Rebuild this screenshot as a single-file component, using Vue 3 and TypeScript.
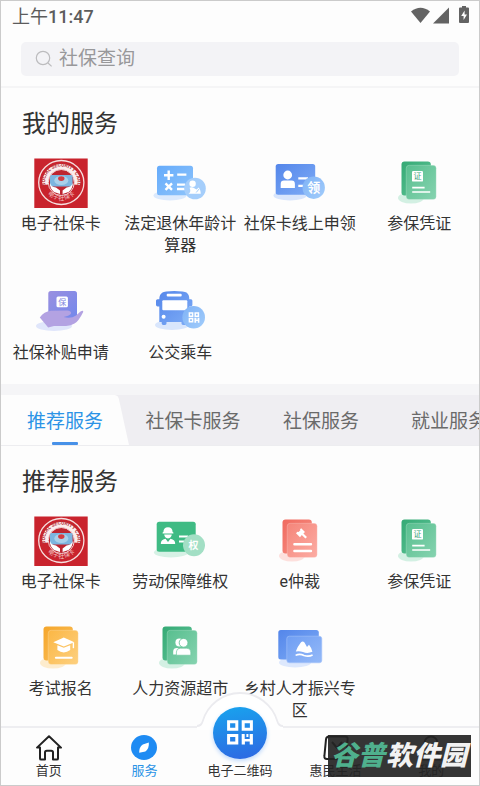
<script setup lang="ts">
import { ref } from 'vue'

interface Service {
  name: string
  icon: string
}

interface NavItem {
  name: string
  icon: string
}

const keyword = ref('')
const activeTab = ref(0)
const activeNav = ref('服务')

const tabs: string[] = ['推荐服务', '社保卡服务', '社保服务', '就业服务']

const myServices: Service[] = [
  { name: '电子社保卡', icon: 'seal' },
  { name: '法定退休年龄计算器', icon: 'calc' },
  { name: '社保卡线上申领', icon: 'apply' },
  { name: '参保凭证', icon: 'proof' },
  { name: '社保补贴申请', icon: 'subsidy' },
  { name: '公交乘车', icon: 'bus' },
]

const recommended: Service[] = [
  { name: '电子社保卡', icon: 'seal' },
  { name: '劳动保障维权', icon: 'labor' },
  { name: 'e仲裁', icon: 'gavel' },
  { name: '参保凭证', icon: 'proof' },
  { name: '考试报名', icon: 'exam' },
  { name: '人力资源超市', icon: 'people' },
  { name: '乡村人才振兴专区', icon: 'village' },
]

const groups = [
  { key: 'mine', title: '我的服务', items: myServices },
  { key: 'recommended', title: '推荐服务', items: recommended },
]

const navItems: NavItem[] = [
  { name: '首页', icon: 'home' },
  { name: '服务', icon: 'compass' },
  { name: '电子二维码', icon: 'qr' },
  { name: '惠民生活', icon: 'life' },
  { name: '我的', icon: 'me' },
]

// Documents share one two-sheet shape and differ in colour and emblem.
const sheetColor: Record<string, string> = {
  proof: 'green',
  people: 'green',
  gavel: 'red',
  exam: 'amber',
}
</script>

<template>
  <div class="page">
    <svg class="defs" aria-hidden="true">
      <defs>
        <linearGradient id="g-sky" x1="0" y1="0" x2="1" y2="1"><stop offset="0" stop-color="#65abfb" /><stop offset="1" stop-color="#8ec4fb" /></linearGradient>
        <linearGradient id="g-blue" x1="0" y1="0" x2="1" y2="1"><stop offset="0" stop-color="#5486ea" /><stop offset="1" stop-color="#7eacf6" /></linearGradient>
        <linearGradient id="g-blue-light" x1="0" y1="0" x2="1" y2="1"><stop offset="0" stop-color="#6f9ef3" /><stop offset="1" stop-color="#94b9f8" /></linearGradient>
        <linearGradient id="g-badge" x1="0" y1="0" x2="1" y2="1"><stop offset="0" stop-color="#7fb2f6" /><stop offset="1" stop-color="#a2cdfb" /></linearGradient>
        <linearGradient id="g-violet" x1="0" y1="0" x2="1" y2="1"><stop offset="0" stop-color="#9a8fe0" /><stop offset="1" stop-color="#7288ec" /></linearGradient>
        <linearGradient id="g-green" x1="0" y1="0" x2="1" y2="1"><stop offset="0" stop-color="#35aa75" /><stop offset="1" stop-color="#5fc497" /></linearGradient>
        <linearGradient id="g-green-light" x1="0" y1="0" x2="1" y2="1"><stop offset="0" stop-color="#58bf8f" /><stop offset="1" stop-color="#86d3b0" /></linearGradient>
        <linearGradient id="g-red" x1="0" y1="0" x2="1" y2="1"><stop offset="0" stop-color="#f06a5f" /><stop offset="1" stop-color="#f79186" /></linearGradient>
        <linearGradient id="g-red-light" x1="0" y1="0" x2="1" y2="1"><stop offset="0" stop-color="#f5857a" /><stop offset="1" stop-color="#fcaca3" /></linearGradient>
        <linearGradient id="g-amber" x1="0" y1="0" x2="1" y2="1"><stop offset="0" stop-color="#f5a62b" /><stop offset="1" stop-color="#fbc05a" /></linearGradient>
        <linearGradient id="g-amber-light" x1="0" y1="0" x2="1" y2="1"><stop offset="0" stop-color="#fbb745" /><stop offset="1" stop-color="#fdd07f" /></linearGradient>
        <path id="seal-arc" d="M15.6 33 A16.2 15.8 0 1 1 45 33" />
        <path id="seal-arc-low" d="M13.6 34.6 A19.5 19 0 0 0 47 34.6" />
      </defs>
    </svg>

    <header class="header">
      <div class="status">
        <span>上午<time>11:47</time></span>
        <svg class="status__icons" viewBox="0 0 60 18" aria-hidden="true">
          <path d="M1 5.5 Q10.5 -2 20 5.5 L10.5 17Z" />
          <path d="M23 17.5 H39 V1.5Z" />
          <path d="M52 0 h4 v1.6 h2 q1 0 1 1 V16 q0 1-1 1 H50 q-1 0-1-1 V2.6 q0-1 1-1 h2Z" />
          <path d="M54.6 4.6 L51.2 10 H53.6 V14 L57 8.6 H54.6Z" fill="#fff" />
        </svg>
      </div>
      <label class="search">
        <svg viewBox="0 0 18 18" aria-hidden="true">
          <circle cx="8" cy="8" r="6.7" /><path d="M13 13 L16.6 16.4" />
        </svg>
        <input v-model="keyword" type="search" placeholder="社保查询" aria-label="社保查询" />
      </label>
    </header>

    <main>
      <template v-for="(group, g) in groups" :key="group.key">
        <div v-if="g === 1" class="tabs" role="tablist">
          <button
            v-for="(tab, i) in tabs"
            :key="tab"
            type="button"
            role="tab"
            class="tab"
            :class="{ 'tab--active': i === activeTab }"
            :aria-selected="i === activeTab"
            @click="activeTab = i"
          >{{ tab }}</button>
        </div>

        <section class="group">
          <h2>{{ group.title }}</h2>
          <div class="grid">
            <a v-for="item in group.items" :key="item.name" class="service" href="#">
              <svg class="service__icon" viewBox="0 0 60 54" aria-hidden="true">
                <g v-if="item.icon === 'seal'">
                  <rect x="3.3" y="2.5" width="53.4" height="49.5" fill="#c9232d" />
                  <ellipse cx="30.3" cy="26.5" rx="22.6" ry="22" fill="none" stroke="#f6dfdf" stroke-width="1.3" />
                  <path d="M11.2 26.5 A19.1 18.5 0 0 1 49.4 26.5 L48.8 29 L43 28.5 A12.8 12.8 0 1 0 17.6 28.5 L11.8 29Z" fill="#fbeeee" />
                  <circle cx="30.3" cy="26.5" r="13" fill="#bd2530" stroke="#f3d4d4" stroke-width="1" />
                  <text class="seal-en"><textPath href="#seal-arc" startOffset="50%">SOCIAL SECURITY CARD</textPath></text>
                  <text class="seal-cn"><textPath href="#seal-arc-low" startOffset="50%">电子社保卡</textPath></text>
                  <rect x="19" y="19" width="22.6" height="11.5" rx="1.5" fill="#7cb5df" />
                  <ellipse cx="30.3" cy="24.5" rx="7" ry="4.5" fill="#a9d0ea" />
                  <ellipse cx="30.3" cy="22.6" rx="3.2" ry="2.4" fill="#d23b42" />
                  <path d="M19 27 Q20 31 25 31.5 L29 34.5 V38 L23 36 Q18.5 32 19 27Z M41.6 27 Q40.6 31 35.6 31.5 L31.6 34.5 V38 L37.6 36 Q42.1 32 41.6 27Z" fill="#fff" />
                </g>

                <g v-else-if="item.icon === 'calc'">
                  <ellipse cx="20" cy="39.5" rx="16.5" ry="5" fill="#dceafd" />
                  <rect x="7" y="9.7" width="36" height="29.5" rx="2.5" fill="url(#g-sky)" />
                  <path d="M14 19.2 H23.4 M18.7 14.5 V23.9 M27.2 18.6 H36.4 M15.5 27.4 L22 33.8 M22 27.4 L15.5 33.8 M27 28.6 H35 M27 33 H35" stroke="#fff" stroke-width="2.4" fill="none" />
                  <circle cx="45" cy="32.5" r="10.8" fill="#a5cefb" />
                  <circle cx="42.6" cy="27.8" r="3.2" fill="#fff" />
                  <path d="M39.6 31.8 Q41 30.6 43 31.6 L46.5 33.5 L48.8 31.4 Q50.5 33 50.8 37.8 H38.5 Q41.5 36 39.6 31.8Z" fill="#fff" />
                  <path d="M46.2 36.5 L49.5 32.5" stroke="#a5cefb" />
                </g>

                <g v-else-if="item.icon === 'apply'">
                  <ellipse cx="20" cy="39.5" rx="16.5" ry="5" fill="#d9e6fc" />
                  <rect x="5.7" y="8" width="39.5" height="30.7" rx="2.5" fill="url(#g-blue)" />
                  <circle cx="17.7" cy="19" r="4.4" fill="#fff" />
                  <path d="M10.7 32 V28 Q10.7 24.6 14 24.6 H21.6 Q24.9 24.6 24.9 28 V32Z" fill="#fff" />
                  <path d="M28.3 22.3 H38 M28.3 29.8 H34" stroke="#fff" stroke-width="2.2" />
                  <circle cx="43.7" cy="31.7" r="11.2" fill="url(#g-badge)" />
                  <text class="badge-text" x="43.7" y="36.2">领</text>
                </g>

                <g v-else-if="item.icon === 'subsidy'">
                  <ellipse cx="23" cy="41" rx="18" ry="5" fill="#e0e6fb" />
                  <rect x="17.3" y="6" width="28.7" height="29" rx="2.5" fill="url(#g-violet)" />
                  <rect x="25.5" y="11.5" width="11.4" height="10.8" rx="1.5" fill="#fff" />
                  <text class="tiny-text tiny-text--violet" x="31.2" y="20">保</text>
                  <path d="M8.8 32.5 Q13 26.6 20 25.8 L36 25.6 Q40.6 26 40 28.6 Q39 31 32.5 32 Q40 34 45 30.5 L49.5 26.5 Q52.5 25 52.2 27 Q47.5 36.5 43.5 38.6 Q40 41 35 41 H23 L17.2 42.5Z" fill="#b3a2e2" />
                </g>

                <g v-else-if="item.icon === 'bus'">
                  <ellipse cx="22" cy="40" rx="17" ry="5" fill="#d9e6fc" />
                  <path d="M12.5 7.6 Q14 6 24.3 6 Q34.5 6 36.5 7.6 Q39.3 9.5 39.3 14.2 H41 Q42.4 14.2 42.4 15.8 V19.8 Q42.4 21.4 41 21.4 H39.3 V37 H36.5 V38.6 Q36.5 40 35 40 H33 Q31.5 40 31.5 38.6 V37 H16.5 V38.6 Q16.5 40 15 40 H13.2 Q11.7 40 11.7 38.6 V37 H9.3 V21.4 H7.6 Q6 21.4 6 19.8 V15.8 Q6 14.2 7.6 14.2 H9.3 Q9.3 9.5 12.5 7.6Z" fill="url(#g-blue)" />
                  <rect x="16.7" y="8.8" width="15" height="2.8" rx="1" fill="#fff" />
                  <rect x="12.3" y="15.3" width="25" height="10" rx="1" fill="#fff" />
                  <circle cx="13.6" cy="31.8" r="2" fill="#fff" />
                  <circle cx="43.7" cy="32.3" r="11.3" fill="url(#g-badge)" />
                  <path d="M39.4 28 h3.2 v3.2 h-3.2Z M45.2 28 h3.2 v3.2 h-3.2Z M39.4 33.6 h3.2 v3.2 h-3.2Z" fill="none" stroke="#fff" stroke-width="1.5" />
                  <path d="M44.4 32.8 h2 v2 h1.2 v-2 h1.8 v5 h-1.6 v-1.8 h-1.6 v1.8 h-1.8Z" fill="#fff" />
                </g>

                <g v-else-if="item.icon === 'labor'">
                  <ellipse cx="21" cy="38.5" rx="17" ry="5" fill="#d6f1e5" />
                  <rect x="6.7" y="7.7" width="39" height="30" rx="2.5" fill="#3fbb84" />
                  <path d="M13.4 18 Q13.5 13.4 18 13.2 Q22.5 13.4 22.6 18 L23.4 18.6 V19.6 H12.6 V18.6Z M14.2 20.4 H21.8 Q21.4 24 18 24.4 Q14.6 24 14.2 20.4Z" fill="#fff" />
                  <path d="M10.8 30 Q10.6 25.6 15.5 24.8 L18 28 L20.5 24.8 Q25.4 25.6 25.2 30Z" fill="#fff" />
                  <path d="M29 22.5 H38 M29 27.5 H34" stroke="#fff" stroke-width="2" />
                  <circle cx="44" cy="31.3" r="11" fill="#a3dfc5" />
                  <text class="badge-text badge-text--small" x="43.4" y="35.2">权</text>
                </g>

                <g v-else-if="item.icon === 'village'">
                  <ellipse cx="25" cy="41.5" rx="16" ry="5" fill="#dde8fd" />
                  <rect x="8.3" y="9" width="40.5" height="29.5" rx="2.5" fill="url(#g-blue)" />
                  <rect x="16.8" y="15.2" width="35" height="26.6" rx="2.5" fill="url(#g-blue-light)" stroke="#a4c2f9" stroke-width="0.6" />
                  <path d="M25.8 30.6 Q27.8 25 31 21.2 Q32.8 19.6 34.5 21.6 L37 26 L39 23.8 Q42 27.5 42.4 30.8 Q37.5 33 33 31 Q29 29.5 25.8 30.6Z" fill="#fff" />
                  <path d="M25.6 34.4 Q29.5 32.4 34 34.4 Q38.5 36 42.6 34" fill="none" stroke="#fff" stroke-width="1.6" />
                </g>

                <g v-else>
                  <ellipse cx="22" cy="42" rx="13" ry="5.5" :class="'sheet-shadow--' + sheetColor[item.icon]" />
                  <rect x="12.5" y="5.6" width="29.3" height="34" rx="3" :fill="`url(#g-${sheetColor[item.icon]})`" />
                  <rect x="17.2" y="9.3" width="30" height="34.2" rx="3" :fill="`url(#g-${sheetColor[item.icon]}-light)`" stroke="#ffffff" stroke-opacity="0.3" stroke-width="0.7" />
                  <template v-if="item.icon === 'proof'">
                    <rect x="23" y="15" width="11" height="10.6" rx="1.2" fill="#fff" />
                    <text class="tiny-text tiny-text--green" x="28.5" y="23.4">证</text>
                    <path d="M23.2 31.6 H35.6 M23.2 36 H41.2" stroke="#fff" stroke-width="1.7" />
                  </template>
                  <template v-else-if="item.icon === 'gavel'">
                    <path d="M31.2 14.2 L35 18 L33.4 19.4 L37 23 L35.4 24.4 L31.8 21 L30 23.2 L26 19.2 L27.4 17.8 L28.6 18 L30.4 16.2 L30 15.2Z" fill="#fff" />
                    <path d="M24.4 30.3 H41 M24.4 37 H41" stroke="#fff" stroke-width="2.4" stroke-linecap="round" />
                  </template>
                  <template v-else-if="item.icon === 'exam'">
                    <path d="M32.8 16.4 L43.3 21.2 L32.8 25.6 L22.3 21.2Z" fill="#fff" />
                    <path d="M26.4 24.2 L32.8 26.8 L39.2 24.2 V29 Q36 31.4 32.8 31.4 Q29.6 31.4 26.4 29Z" fill="#fff" />
                    <path d="M42.4 21.4 V27.2" stroke="#fff" stroke-width="1.4" />
                    <path d="M24.9 36.7 H40.7" stroke="#fff" stroke-width="2" stroke-linecap="round" />
                  </template>
                  <template v-else>
                    <circle cx="29.4" cy="21.6" r="4" fill="#fff" />
                    <path d="M23.2 33.6 V30.4 Q23.2 27 27 27 H28.6 Q26.6 28.6 26.6 31 V33.6Z" fill="#fff" />
                    <circle cx="33.6" cy="21.8" r="4.4" fill="#fff" stroke="#66c499" stroke-width="0.9" />
                    <path d="M26.4 34.2 V31 Q26.4 27.2 30.4 27.2 H36.8 Q40.8 27.2 40.8 31 V34.2Z" fill="#fff" stroke="#66c499" stroke-width="0.6" />
                  </template>
                </g>
              </svg>
              <span>{{ item.name }}</span>
            </a>
          </div>
        </section>
      </template>
    </main>

    <nav class="nav">
      <svg class="nav__bulge" viewBox="0 0 96 36" aria-hidden="true">
        <path class="nav__bulge-shade" d="M5 32.5 Q10 32.5 11.5 27 A38 38 0 0 1 84.5 27 Q86 32.5 91 32.5" />
        <path d="M5 33 Q10 33 11.5 27.5 A38 38 0 0 1 84.5 27.5 Q86 33 91 33 V36 H5Z" fill="#fff" />
      </svg>
      <a
        v-for="item in navItems"
        :key="item.name"
        class="nav__item"
        :class="{ 'nav__item--active': item.name === activeNav }"
        href="#"
        @click.prevent="activeNav = item.name"
      >
        <svg v-if="item.icon === 'home'" class="nav__icon" viewBox="0 0 26 26" aria-hidden="true">
          <path d="M1 12.6 L13 1.2 L25 12.6 H22 V23.4 Q22 24.6 20.8 24.6 H17 V17.6 Q17 15.8 15.2 15.8 H10.8 Q9 15.8 9 17.6 V24.6 H5.2 Q4 24.6 4 23.4 V12.6Z" />
        </svg>
        <svg v-else-if="item.icon === 'compass'" class="nav__icon" viewBox="0 0 26 26" aria-hidden="true">
          <ellipse class="solid" cx="13" cy="12.5" rx="13" ry="12.5" />
          <path class="leaf" d="M17.8 7.6 Q18.4 13.6 14.4 16.4 L8.2 17.8 Q7.8 12.2 11.8 9.4Z" />
        </svg>
        <span v-else-if="item.icon === 'qr'" class="nav__qr">
          <svg viewBox="0 0 26 26" aria-hidden="true">
            <path d="M1.6 1.8 h8.2 v7.4 h-8.2Z M16.2 1.8 h8.2 v7.4 h-8.2Z M1.6 15.6 h8.2 v7.4 h-8.2Z" fill="none" stroke="#fff" stroke-width="3" />
            <path d="M14.7 14 h3 v5 h5 v-5 h3.2 v10.6 h-3.2 v-3 h-4.8 v3 h-3.2Z M19.4 14 h2 v3 h-2Z" fill="#fff" />
          </svg>
        </span>
        <svg v-else-if="item.icon === 'life'" class="nav__icon" viewBox="0 0 26 26" aria-hidden="true">
          <path d="M6 1.5 H22 Q25 1.5 24.6 4.4 L23 21 Q22.6 24 19.6 24 H4 Q1 24 1.4 21 L3 4.4 Q3.4 1.5 6 1.5Z M9 7 L14 13 L19 7" />
        </svg>
        <svg v-else class="nav__icon" viewBox="0 0 26 26" aria-hidden="true">
          <circle cx="13" cy="8" r="6.5" /><path d="M2.5 24.5 Q3 16.5 13 16.5 Q23 16.5 23.5 24.5Z" />
        </svg>
        <span>{{ item.name }}</span>
      </a>
    </nav>

    <div class="watermark"><b>谷普</b><strong>软件园</strong></div>
  </div>
</template>

<style>
body {
  background: #fdfdfd;
}
</style>

<style scoped>
.page {
  position: relative;
  display: flex;
  flex-direction: column;
  box-sizing: border-box;
  min-height: 100vh;
  padding: 1px;
  overflow: hidden;
  background: #fdfdfd;
  color: #333;
  font-family: Roboto, "Noto Sans CJK SC", sans-serif;
  outline: 1px solid #cbcbcb;
  outline-offset: -1px;
}

.defs {
  position: absolute;
  width: 0;
  height: 0;
}

a {
  color: inherit;
  text-decoration: none;
}

.header {
  padding-bottom: 10px;
  border-bottom: 2px solid #f5f5f6;
}

.status {
  display: flex;
  align-items: center;
  justify-content: space-between;
  height: 28px;
  padding: 0 9px 0 11px;
  color: #5c5c5c;
  font-size: 18px;
}

.status time {
  font-weight: 500;
}

.status__icons {
  width: 60px;
  height: 18px;
  fill: #636363;
}

.search {
  display: flex;
  align-items: center;
  gap: 6px;
  height: 34px;
  margin: 13px 20px 0;
  padding: 0 14px;
  border-radius: 5px;
  background: #f3f3f6;
}

.search svg {
  width: 18px;
  height: 18px;
  fill: none;
  stroke: #bcbcbe;
  stroke-width: 1.2;
}

.search input {
  flex: 1;
  min-width: 0;
  padding: 0;
  border: 0;
  outline: 0;
  background: none;
  color: #333;
  font: inherit;
  font-size: 19px;
  line-height: 28px;
  appearance: none;
}

.search input::placeholder {
  color: #98989a;
  opacity: 1;
}

.group {
  padding: 18px 0 4px;
}

.group:first-child {
  padding-bottom: 20px;
}

h2 {
  margin: 0 21px 14px;
  font-size: 24px;
  font-weight: 400;
  line-height: 36px;
}

.grid {
  display: grid;
  grid-template-columns: repeat(4, 1fr);
  row-gap: 28px;
}

.service {
  display: flex;
  flex-direction: column;
  align-items: center;
  gap: 3px;
  font-size: 16px;
  line-height: 22px;
  text-align: center;
}

.service__icon {
  width: 60px;
  height: 54px;
}

.service__icon text {
  text-anchor: middle;
}

.seal-en {
  fill: #b5323a;
  font-size: 5px;
  font-weight: 700;
}

.seal-cn {
  fill: #f3c9c9;
  font-size: 6px;
}

.badge-text {
  fill: #fff;
  font-size: 13px;
  font-weight: 700;
}

.badge-text--small {
  font-size: 10px;
}

.tiny-text {
  font-size: 8px;
}

.tiny-text--green {
  fill: #3fa578;
}

.tiny-text--violet {
  fill: #8085de;
}

.sheet-shadow--green {
  fill: #d3f0e3;
}

.sheet-shadow--red {
  fill: #fde0dd;
}

.sheet-shadow--amber {
  fill: #fdeccd;
}

.tabs {
  display: flex;
  overflow: hidden;
  border-top: 11px solid #f5f5f7;
  border-bottom: 1px solid #ededf0;
  background: #efeef2;
}

.tab {
  position: relative;
  flex: 0 0 128px;
  height: 50px;
  padding: 0 0 2px;
  border: 0;
  background: none;
  color: #6a6a6a;
  font: inherit;
  font-size: 19px;
  white-space: nowrap;
  cursor: pointer;
}

.tab--active {
  background: #fdfdfd;
  color: #2b93e6;
  clip-path: polygon(0 0, 89% 0, 91% 2%, 92% 7%, 100% 100%, 0 100%);
}

.tab--active::after {
  content: "";
  position: absolute;
  bottom: 0;
  left: calc(50% - 13px);
  width: 26px;
  height: 3px;
  border-radius: 1px;
  background: #4791e8;
}

.nav {
  position: relative;
  display: grid;
  grid-template-columns: repeat(5, 1fr);
  margin-top: auto;
  padding: 7px 0 5px;
  border-top: 2px solid #eeeef1;
  background: #fdfdfd;
}

.nav__bulge {
  position: absolute;
  top: -34px;
  left: calc(50% - 48px);
  width: 96px;
  height: 36px;
  overflow: visible;
}

.nav__bulge-shade {
  fill: none;
  stroke: #ebebef;
  stroke-width: 3;
}

.nav__item {
  position: relative;
  display: flex;
  flex-direction: column;
  align-items: center;
  gap: 1px;
  font-size: 13px;
  line-height: 18px;
}

.nav__item--active {
  color: #2b93e6;
}

.nav__icon {
  width: 26px;
  height: 26px;
  fill: none;
  stroke: #222;
  stroke-width: 2;
  stroke-linejoin: round;
}

.nav__icon .solid {
  fill: #1e8bf3;
  stroke: none;
}

.nav__icon .leaf {
  fill: #fff;
  stroke: none;
}

.nav__qr {
  display: flex;
  align-items: center;
  justify-content: center;
  width: 54px;
  height: 52px;
  margin: -28px 0 2px;
  border-radius: 50%;
  background: linear-gradient(170deg, #18a4ee, #2e66e2);
  box-shadow: 0 2px 4px #bfd9fb;
}

.nav__qr svg {
  width: 26px;
  height: 26px;
}

.watermark {
  position: absolute;
  right: 9px;
  bottom: 9px;
  display: flex;
  align-items: center;
  gap: 1px;
  height: 42px;
  padding: 0 4px 0 3px;
  background: rgba(36, 36, 36, 0.92);
  font-size: 27px;
  font-style: italic;
  line-height: 42px;
}

.watermark b {
  color: #4fb08d;
  font-weight: 900;
}

.watermark strong {
  color: #f2f2f2;
  font-weight: 900;
}
</style>
